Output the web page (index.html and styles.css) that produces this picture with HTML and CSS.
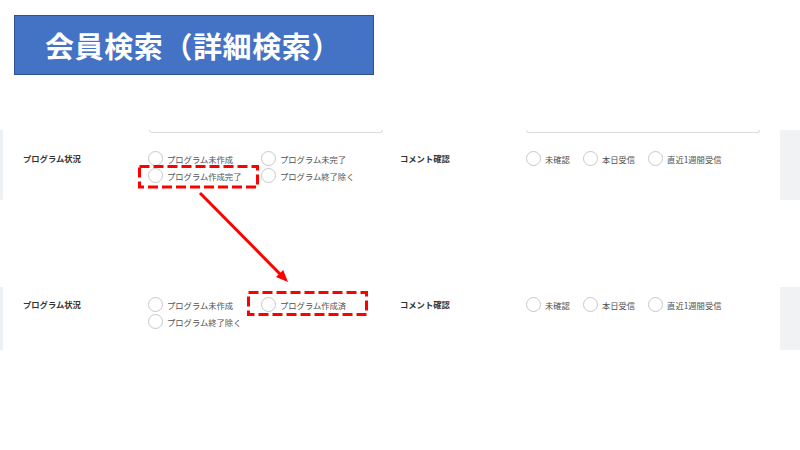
FILE: index.html
```
<!DOCTYPE html>
<html lang="ja">
<head>
<meta charset="utf-8">
<title>会員検索（詳細検索）</title>
<link rel="stylesheet" href="styles.css">
</head>
<body>
<div class="page">
  <header class="title">会員検索（詳細検索）</header>

  <section class="panel panel-top">
    <div class="strip"></div>
    <div class="content">
      <div class="fields">
        <div class="field field-a"></div>
        <div class="field field-b"></div>
      </div>
      <div class="row">
        <div class="label">プログラム状況</div>
        <div class="options options-grid">
          <div class="opt"><span class="radio"></span><span>プログラム未作成</span></div>
          <div class="opt"><span class="radio"></span><span>プログラム未完了</span></div>
          <div class="opt"><span class="radio"></span><span>プログラム作成完了</span></div>
          <div class="opt"><span class="radio"></span><span>プログラム終了除く</span></div>
        </div>
        <div class="label">コメント確認</div>
        <div class="options options-inline">
          <div class="opt"><span class="radio"></span><span>未確認</span></div>
          <div class="opt"><span class="radio"></span><span>本日受信</span></div>
          <div class="opt"><span class="radio"></span><span>直近1週間受信</span></div>
        </div>
      </div>
    </div>
    <div class="side"></div>
  </section>

  <section class="panel panel-bottom">
    <div class="strip"></div>
    <div class="content">
      <div class="row">
        <div class="label">プログラム状況</div>
        <div class="options options-grid">
          <div class="opt"><span class="radio"></span><span>プログラム未作成</span></div>
          <div class="opt"><span class="radio"></span><span>プログラム作成済</span></div>
          <div class="opt"><span class="radio"></span><span>プログラム終了除く</span></div>
        </div>
        <div class="label">コメント確認</div>
        <div class="options options-inline">
          <div class="opt"><span class="radio"></span><span>未確認</span></div>
          <div class="opt"><span class="radio"></span><span>本日受信</span></div>
          <div class="opt"><span class="radio"></span><span>直近1週間受信</span></div>
        </div>
      </div>
    </div>
    <div class="side"></div>
  </section>

  <svg class="annot" width="800" height="450" viewBox="0 0 800 450" aria-hidden="true">
    <rect x="139.5" y="166.5" width="118" height="20.5" fill="none" stroke="#ff0000" stroke-width="3" stroke-dasharray="10 4"/>
    <rect x="248.5" y="292.5" width="118" height="22" fill="none" stroke="#ff0000" stroke-width="3" stroke-dasharray="10 4"/>
    <line x1="200" y1="193" x2="280" y2="274" stroke="#ff0000" stroke-width="3"/>
    <polygon points="288,282 276,277 283.2,270" fill="#ff0000"/>
  </svg>
</div>
</body>
</html>
```
FILE: styles.css
```
html, body {
  margin: 0;
  padding: 0;
  background: #ffffff;
}

.page {
  position: relative;
  width: 800px;
  height: 450px;
  overflow: hidden;
  font-family: "Noto Sans CJK JP", "Noto Sans", sans-serif;
}

.title {
  margin: 15px 0 0 14px;
  width: 360px;
  height: 60px;
  box-sizing: border-box;
  background: #4472c4;
  border: 1px solid #2f528f;
  color: #ffffff;
  font-weight: 700;
  font-size: 29px;
  padding-left: 30px;
  display: flex;
  align-items: center;
  letter-spacing: 0.6px;
}

.panel {
  display: flex;
}

.panel-top {
  margin-top: 55px;
  height: 70px;
}

.panel-bottom {
  margin-top: 87px;
  height: 63px;
}

.strip {
  width: 3px;
  background: #eef1f4;
}

.side {
  width: 20px;
  background: #f1f2f4;
}

.content {
  flex: 1;
  padding-left: 20px;
}

.fields,
.row {
  display: grid;
  grid-template-columns: 125px 252px 126px 1fr;
}

.field {
  height: 2px;
  border: 1px solid #dcdcdc;
  border-top: none;
  border-radius: 0 0 4px 4px;
}

.field-a {
  grid-column: 2;
  margin-left: 1px;
  width: 232px;
}

.field-b {
  grid-column: 4;
  width: 232px;
}

.panel-top .row {
  margin-top: 18px;
}

.panel-bottom .row {
  margin-top: 10px;
}

.label {
  font-size: 8.3px;
  font-weight: 700;
  color: #333333;
  line-height: 14px;
}

.options {
  display: flex;
  flex-wrap: wrap;
  row-gap: 2px;
}

.options-grid .opt {
  width: 113px;
}

.options-inline {
  column-gap: 13px;
}

.opt {
  display: flex;
  align-items: center;
  gap: 4px;
  height: 15px;
  font-size: 8.3px;
  color: #505050;
  white-space: nowrap;
}

.radio {
  width: 15px;
  height: 15px;
  box-sizing: border-box;
  border: 1px solid #c8c8c8;
  border-radius: 50%;
  background: #ffffff;
  flex: none;
}

.annot {
  position: absolute;
  left: 0;
  top: 0;
  pointer-events: none;
}
```
